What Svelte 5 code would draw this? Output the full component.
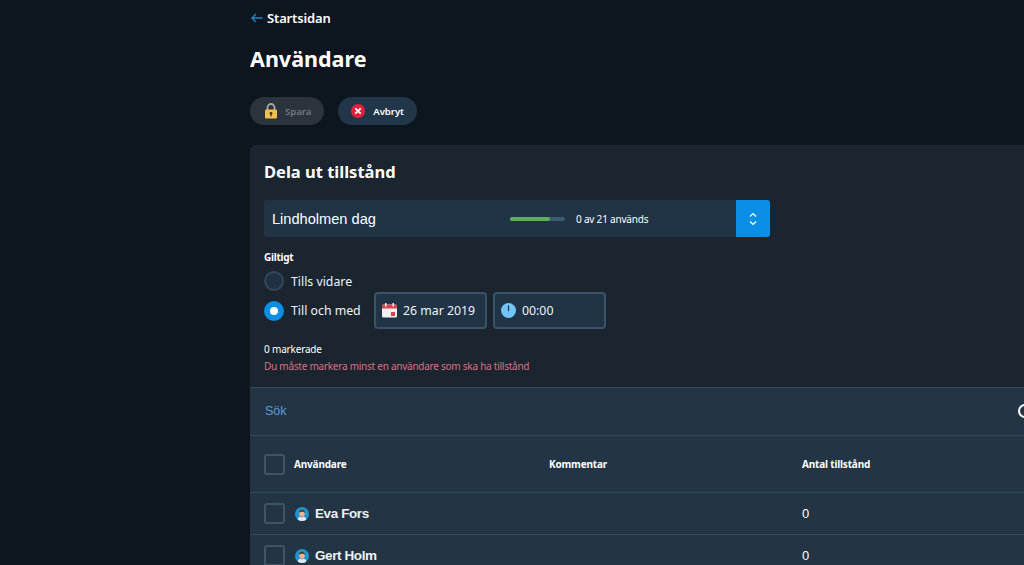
<script>
  const users = [
    { name: "Eva Fors", count: 0 },
    { name: "Gert Holm", count: 0 }
  ]
</script>

{#snippet avatar()}
  <svg class="avatar" viewBox="0 0 14 14" aria-hidden="true">
    <circle cx="7" cy="7" r="7" fill="#1f95cf" />
    <path d="M2.600 12.400c.6-2.400 2.300-3.200 4.400-3.200s3.800.8 4.400 3.200A7 7 0 0 1 7 14a7 7 0 0 1-4.400-1.600z" fill="#dfe8ee" />
    <circle cx="7" cy="6.400" r="2.800" fill="#eeb58e" />
    <path d="M4 6.200C3.800 3.600 5.400 2.700 7 2.700s3.200.9 3 3.500c-.7-1-1.500-1.400-3-1.400s-2.300.4-3 1.400z" fill="#5a3320" />
    <path d="M6.200 9.200h1.600L7 11z" fill="#c9473c" />
  </svg>
{/snippet}

<div class="page">
  <a class="back" href="#top">
    <svg viewBox="0 0 12 10" aria-hidden="true">
      <path d="M11.500 5H1M4.800 1 1 5l3.800 4" fill="none" stroke="#1b87c9" stroke-width="1.300" />
    </svg>
    Startsidan
  </a>

  <h1>Användare</h1>

  <div class="actions">
    <button class="pill disabled">
      <svg class="lock" viewBox="0 0 14 16" aria-hidden="true">
        <path d="M3.500 7V4.500a3.500 3.500 0 0 1 7 0V7" fill="none" stroke="#a9a9a5" stroke-width="1.800" />
        <rect x="1" y="6.500" width="12" height="9" rx="1.200" fill="#f2c04c" />
        <circle cx="7" cy="10.300" r="1.400" fill="#3a3323" />
        <rect x="6.400" y="10.500" width="1.200" height="3" fill="#3a3323" />
      </svg>
      Spara
    </button>
    <button class="pill">
      <svg viewBox="0 0 14 14" aria-hidden="true">
        <circle cx="7" cy="7" r="7" fill="#e3213d" />
        <path d="M4.300 4.300l5.400 5.400M9.700 4.300l-5.400 5.400" stroke="#fff" stroke-width="1.700" />
      </svg>
      Avbryt
    </button>
  </div>

  <section class="card">
    <div class="form">
      <h2>Dela ut tillstånd</h2>

      <div class="select">
        <span class="select-name">Lindholmen dag</span>
        <span class="usage">
          <span class="bar"><span class="bar-fill"></span></span>
          0 av 21 används
        </span>
        <span class="select-btn">
          <svg viewBox="0 0 8 14" aria-hidden="true">
            <path d="M1 4.500 4 1.500l3 3M1 9.500l3 3 3-3" fill="none" stroke="#fff" stroke-width="1.200" />
          </svg>
        </span>
      </div>

      <div class="label">Giltigt</div>

      <div class="radio-row first">
        <span class="radio"></span>
        <span>Tills vidare</span>
      </div>
      <div class="radio-row">
        <span class="radio on"></span>
        <span class="radio-text">Till och med</span>
        <span class="field date">
          <svg viewBox="0 0 15 15" aria-hidden="true">
            <rect y="1.500" width="15" height="13" rx="1.500" fill="#f0f0f0" />
            <path d="M0 3a1.500 1.500 0 0 1 1.500-1.500h12A1.500 1.500 0 0 1 15 3v2.500H0z" fill="#d8434e" />
            <rect x="3" width="1.600" height="3.500" fill="#e8e8e8" />
            <rect x="10.400" width="1.600" height="3.500" fill="#e8e8e8" />
            <rect x="9" y="9" width="4" height="4" fill="#d8434e" />
          </svg>
          26 mar 2019
        </span>
        <span class="field time">
          <svg viewBox="0 0 15 15" aria-hidden="true">
            <circle cx="7.500" cy="7.500" r="7.500" fill="#72c4f7" />
            <path d="M7.500 2.500v5.500" stroke="#1d3144" stroke-width="1.200" />
          </svg>
          00:00
        </span>
      </div>

      <div class="marked">0 markerade</div>
      <div class="error">Du måste markera minst en användare som ska ha tillstånd</div>
    </div>

    <div class="search">
      <span>Sök</span>
      <span class="search-icon"></span>
    </div>

    <div class="table-head">
      <span class="check-col"><span class="check"></span></span>
      <span class="col-user">Användare</span>
      <span class="col-comment">Kommentar</span>
      <span class="col-count">Antal tillstånd</span>
    </div>

    {#each users as user}
      <div class="row">
        <span class="check-col"><span class="check"></span></span>
        <span class="col-user user">
          {@render avatar()}
          {user.name}
        </span>
        <span class="col-comment"></span>
        <span class="col-count count">{user.count}</span>
      </div>
    {/each}
  </section>
</div>

<style>
  :global(body) {
    background: #0d151e;
    overflow: hidden;
    font-family: "Noto Sans", sans-serif;
    color: #fff;
  }

  .page {
    box-sizing: border-box;
    width: 820px;
    height: 565px;
    margin-left: 250px;
    padding-top: 8px;
    overflow: hidden;
  }

  .back {
    display: flex;
    align-items: center;
    gap: 4px;
    height: 20px;
    margin-left: 1px;
    color: #fff;
    font-size: 13px;
    font-weight: 600;
    letter-spacing: -0.15px;
    text-decoration: none;
  }

  .back svg {
    width: 12px;
    height: 10px;
  }

  h1 {
    margin: 14px 0 0;
    font-size: 21.500px;
    font-weight: 700;
    line-height: 34px;
  }

  .actions {
    display: flex;
    gap: 14px;
    margin-top: 21px;
  }

  .pill {
    display: flex;
    align-items: center;
    gap: 8px;
    height: 28px;
    padding: 0 13px;
    border: none;
    border-radius: 14px;
    background: #22364a;
    color: #fff;
    font-family: inherit;
    font-size: 9.600px;
    font-weight: 600;
    letter-spacing: -0.05px;
  }

  .pill svg {
    width: 14px;
    height: 14px;
  }

  .pill svg.lock {
    height: 16px;
  }

  .pill.disabled {
    padding: 0 13px 0 14px;
    background: #2b343d;
    color: #75797e;
    gap: 7px;
  }

  .card {
    margin-top: 20px;
    border-radius: 6px 6px 0 0;
    background: #1a2530;
  }

  .form {
    padding: 14px 14px 12px;
  }

  h2 {
    margin: 0;
    font-size: 16.500px;
    font-weight: 700;
    line-height: 26px;
  }

  .select {
    display: flex;
    align-items: center;
    width: 506px;
    height: 37px;
    margin-top: 15px;
    border-radius: 3px;
    background: #203446;
  }

  .select-name {
    width: 238px;
    margin-left: 8px;
    font-family: "Liberation Sans", sans-serif;
    font-size: 14.600px;
  }

  .usage {
    display: flex;
    align-items: center;
    gap: 11px;
    flex: 1;
    font-size: 10px;
    letter-spacing: -0.2px;
  }

  .bar {
    width: 55px;
    height: 4px;
    border-radius: 2px;
    background: #3e5a75;
  }

  .bar-fill {
    display: block;
    width: 72%;
    height: 100%;
    border-radius: 2px;
    background: #5cb04f;
  }

  .select-btn {
    display: flex;
    align-items: center;
    justify-content: center;
    width: 34px;
    height: 100%;
    border-radius: 0 3px 3px 0;
    background: #0a8ee6;
  }

  .select-btn svg {
    width: 8px;
    height: 14px;
  }

  .label {
    margin-top: 13px;
    font-size: 10px;
    font-weight: 700;
    letter-spacing: -0.25px;
    line-height: 14px;
  }

  .radio-row {
    display: flex;
    align-items: center;
    height: 37px;
    font-size: 12.300px;
    color: #f0f3f5;
  }

  .radio-row.first {
    height: 24px;
    margin-top: 5px;
    margin-bottom: -1px;
  }

  .radio-row > span:nth-child(2) {
    margin-left: 7px;
  }

  .radio {
    box-sizing: border-box;
    width: 20px;
    height: 20px;
    border: 2px solid #36495c;
    border-radius: 50%;
    background: #1f3143;
  }

  .radio.on {
    border: 6.500px solid #0a8ee6;
    background: #fff;
  }

  .radio-text {
    width: 83px;
  }

  .field {
    box-sizing: border-box;
    display: flex;
    align-items: center;
    height: 37px;
    border: 2px solid #3b5368;
    border-radius: 4px;
    background: #203446;
  }

  .field svg {
    width: 15px;
    height: 15px;
  }

  .date {
    width: 113px;
    gap: 6px;
    padding-left: 6px;
  }

  .time {
    width: 113px;
    gap: 6px;
    margin-left: 6px;
    padding-left: 6px;
  }

  .marked {
    margin-top: 12px;
    font-size: 10px;
    letter-spacing: -0.18px;
    line-height: 17px;
  }

  .error {
    font-size: 10px;
    letter-spacing: -0.25px;
    line-height: 17px;
    color: #dc6f80;
  }

  .search {
    display: flex;
    align-items: center;
    justify-content: space-between;
    box-sizing: border-box;
    height: 49px;
    padding: 0 15px 1px;
    border-top: 1px solid #33495c;
    border-bottom: 1px solid #33495c;
    background: #233545;
    color: #5b9bd5;
    font-family: "Liberation Sans", sans-serif;
    font-size: 12.500px;
  }

  .search-icon {
    box-sizing: border-box;
    width: 14px;
    height: 14px;
    margin-right: 23px;
    border: 2px solid #fff;
    border-radius: 50%;
  }

  .table-head,
  .row {
    display: flex;
    align-items: center;
    box-sizing: border-box;
    border-bottom: 1px solid #33495c;
    background: #233545;
  }

  .table-head {
    height: 57px;
    font-size: 10px;
    font-weight: 700;
    letter-spacing: -0.18px;
  }

  .row {
    height: 42px;
  }

  .check-col {
    width: 44px;
    padding-left: 14px;
    box-sizing: border-box;
  }

  .check {
    display: block;
    box-sizing: border-box;
    width: 21px;
    height: 21px;
    border: 2px solid #3e5468;
    border-radius: 3px;
  }

  .col-user {
    width: 255px;
  }

  .col-comment {
    width: 253px;
  }

  .user {
    display: flex;
    align-items: center;
    gap: 6px;
    font-family: "Liberation Sans", sans-serif;
    font-size: 13.500px;
    font-weight: 700;
    letter-spacing: -0.4px;
    color: #eef2f5;
  }

  .avatar {
    width: 14px;
    height: 14px;
    margin-left: 1px;
  }

  .count {
    font-family: "Liberation Sans", sans-serif;
    font-size: 13px;
    letter-spacing: 0;
    font-weight: 400;
  }
</style>
